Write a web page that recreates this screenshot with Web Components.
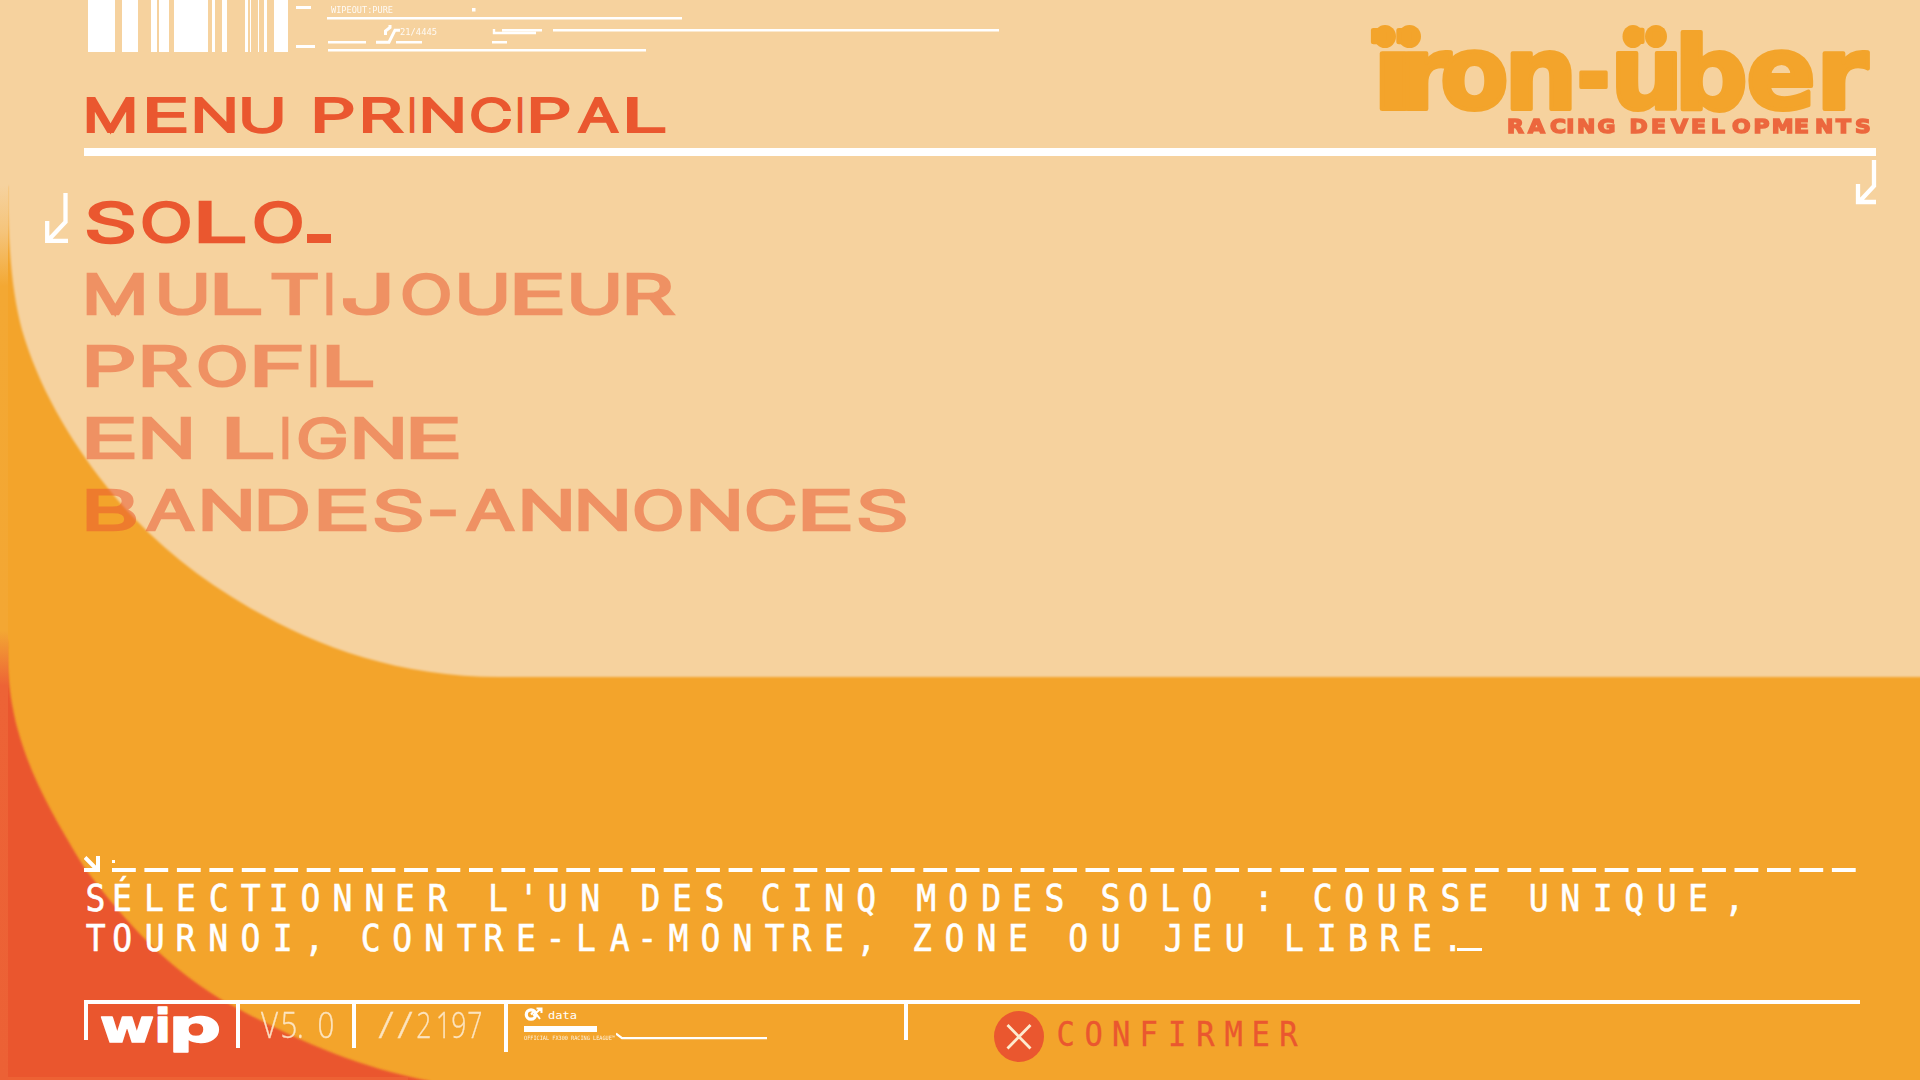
<!DOCTYPE html>
<html lang="fr">
<head>
<meta charset="utf-8">
<title>Menu principal</title>
<style>
html,body{margin:0;padding:0;width:1920px;height:1080px;overflow:hidden;background:#f3a42b}
</style>
</head>
<body>
<game-screen></game-screen>
<script>
const shadow = (el, html) => {
  const t = document.createElement('template');
  t.innerHTML = html;
  const root = el.attachShadow({mode: 'open'});
  root.append(t.content.cloneNode(true));
  return root;
};
const pen = document.createElement('canvas').getContext('2d');
const CAP = {'Roboto': .711, 'DejaVu Sans Mono': .729, 'DejaVu Sans': .729, 'Open Sans': .714, 'Inter': .727};

/* One line of text whose letters sit on a fixed pitch.
   at: left edge of every non-blank letter; w: default ink width, then letter exceptions.
   plain: all letters share one horizontal scale (its value) and are centred in their cells. */
class PitchText extends HTMLElement {
  connectedCallback() {
    if (this.shadowRoot) return;
    const a = (n, d) => this.getAttribute(n) ?? d;
    const text = this.textContent;
    const family = a('face', 'Inter'), weight = a('weight', '400');
    const h = +a('cap', 42), sw = +a('pen', 0), k = +a('ratio', CAP[family]);
    const size = (h - sw) / k;
    const at = a('at', '').split(' ').map(Number), origin = +a('origin', at[0]);
    const [base, ...rest] = a('w', '49').split(' ');
    const special = Object.fromEntries(rest.map(r => [r[0], +r.slice(1)]));
    const q = +a('plain', 1) || 1;
    pen.font = `${weight} ${size}px "${family}"`;
    let body = '', i = 0, end = 0;
    if (this.hasAttribute('span')) {
      const [s, e] = a('span').split(' ').map(Number);
      body = `<text y="${h - sw / 2}" x="${s - origin}" textLength="${e - s}" lengthAdjust="spacingAndGlyphs">${text}</text>`;
      end = e;
    } else {
      const xs = [];
      let spans = '';
      for (const c of text) {
        if (c === ' ') { spans += ' '; xs.push((at[i - 1] + at[i]) / 2 / q - origin / q); continue; }
        const m = pen.measureText(c), W = special[c] ?? +base;
        const l = m.actualBoundingBoxLeft, r = m.actualBoundingBoxRight;
        const s = W / (r + l + sw);
        const x = at[i] - origin + s * (l + sw / 2);
        spans += `<tspan x="${x.toFixed(2)}" textLength="${(m.width * s).toFixed(2)}" lengthAdjust="spacingAndGlyphs">${c}</tspan>`;
        xs.push(((at[i] - origin + W / 2) / q - (r - l) / 2).toFixed(2));
        end = at[i++] + W;
      }
      body = this.hasAttribute('plain') ? `<text transform="scale(${q} 1)" y="${h - sw / 2}" x="${xs.join(' ')}">${text}</text>` : `<text y="${h - sw / 2}">${spans}</text>`;
    }
    shadow(this, `<style>
      :host{display:block}
      svg{display:block;overflow:visible}
      text{font-family:"${family}",sans-serif;font-weight:${weight};font-size:${size}px;fill:currentColor;
        stroke:currentColor;stroke-width:${sw};stroke-linejoin:${a('join', 'miter')};stroke-miterlimit:3;white-space:pre}
    </style>
    <svg width="${Math.ceil(end - origin)}" height="${h}">${body}</svg>`);
  }
}

class SceneBackdrop extends HTMLElement {
  connectedCallback() {
    shadow(this, `<style>:host{display:block;grid-area:1/1;width:1920px;height:1080px}svg{display:block}</style>
    <svg width="1920" height="1080">
      <defs>
        <linearGradient id="rim" gradientUnits="userSpaceOnUse" x1="0" y1="0" x2="0" y2="1080">
          <stop offset=".172" stop-color="#f6d29e"/><stop offset=".215" stop-color="#f5c47a"/><stop offset=".265" stop-color="#f3a833"/>
          <stop offset=".584" stop-color="#f3a733"/><stop offset=".635" stop-color="#ed6336"/><stop offset="1" stop-color="#ec6135"/>
        </linearGradient>
        <filter id="soft" x="-5%" y="-5%" width="110%" height="110%"><feGaussianBlur stdDeviation="1.1"/></filter>
      </defs>
      <rect width="1920" height="1080" fill="#f3a42b"/>
      <path filter="url(#soft)" fill="#f6d29e" d="M-30 -30V186H7.500C8 245 12 293 22 330C38 385 68 438 107 487C146 536 193 575 250 608C320 648 400 677 500 677H1950V-30Z"/>
      <path filter="url(#soft)" fill="#ea572f" d="M-20 640H7C8 670 8 690 17 727C30 775 52 815 84 867C125 922 165 965 222 1000C280 1032 350 1066 430 1081V1110H-20Z"/>
      <rect width="8" y="183" height="897" fill="url(#rim)"/>
      <rect x="8" y="1077" width="400" height="3" fill="#ee6a38" opacity=".6"/>
    </svg>`);
  }
}

class TelemetryStrip extends HTMLElement {
  connectedCallback() {
    const bars = [[88,27],[122,16],[151,6],[159,10],[174,34],[212,3],[222,5],[245,3],[250,1],[258,1],[264,3],[274,14]];
    shadow(this, `<style>
      :host{display:flex;height:52px;padding-left:4px}
      svg{display:block;flex:none}
      .data{flex:none;width:711px;height:52px;color:#fff;display:grid;grid-template:1fr/1fr}
      .data>*{grid-area:1/1}
      .a{padding:5.500px 0 0 43px;opacity:.9}.b{padding:29px 0 0 112px;opacity:.9}
    </style>
    <svg width="200" height="52" fill="#fff">${bars.map(([x, w]) => `<rect x="${x - 88}" width="${w}" height="52"/>`).join('')}</svg>
    <div class="data">
      <svg width="711" height="52" viewBox="288 0 711 52" fill="none" stroke="#fff" stroke-width="2.400">
        <path stroke-width="3" d="M296 7.500H311M296 46.500H315"/>
        <path d="M327 18.200H682M553 30.200H999M328 50.200H646M328 42.200H366M396 42.200H422M492 42.200H507M502 30.200H542M494 29V33H536"/>
        <path stroke-width="3" d="M385.500 35V31L390 27.500V25M400 30.200H395L389 42.200H376"/>
        <rect x="472" y="8" width="3.500" height="3.500" fill="#fff" stroke="none"/>
      </svg>
      <pitch-text class="a" face="DejaVu Sans Mono" cap="6.500" origin="331" span="331 393">WIPEOUT:PURE</pitch-text>
      <pitch-text class="b" face="DejaVu Sans Mono" cap="6" origin="400" span="400 437">21/4445</pitch-text>
    </div>`);
  }
}

class TeamLogo extends HTMLElement {
  connectedCallback() {
    shadow(this, `<style>
      :host{display:flex;flex-direction:column;width:512px;margin-right:44px;padding-top:22px;box-sizing:border-box;height:148px}
      .name{color:#f3a42b;padding-top:28px}
      .mark{display:grid}
      .mark>*{grid-area:1/1}
      .mark svg{display:block}
      .sub{color:#ec5f36;margin:7px 0 0 142px;filter:blur(.7px);opacity:.92}
    </style>
    <div class="mark">
      <svg width="512" height="89" viewBox="1364 22 512 89" fill="#f3a42b"><ellipse cx="1385" cy="36.500" rx="11" ry="11.500"/><ellipse cx="1409.500" cy="36.500" rx="11.500" ry="11.500"/><ellipse cx="1633" cy="36.500" rx="10.500" ry="11.500"/><ellipse cx="1656" cy="36.500" rx="11" ry="11.500"/></svg>
      <pitch-text class="name" face="DejaVu Sans" weight="700" ratio=".56" cap="61" pen="4" join="round" origin="1364" at="1370 1405 1442 1510 1579 1615 1680 1748 1822" w="62 ï48 r48 o65 -29 b66 e66">ïron-über</pitch-text>
    </div>
    <pitch-text plain="1.1" class="sub" face="DejaVu Sans" weight="700" cap="16" pen="1.500" origin="1506" at="1507 1528 1549 1567.500 1577 1597 1630 1650 1671 1690 1710 1732 1753 1773.500 1793 1815 1835 1854" w="17.500 I5">RACING DEVELOPMENTS</pitch-text>`);
  }
}

class CornerArrow extends HTMLElement {
  connectedCallback() {
    shadow(this, `<style>:host{display:block}svg{display:block;overflow:visible}</style>
    <svg width="${this.getAttribute('width')}" height="${this.getAttribute('height')}" viewBox="${this.getAttribute('box')}" fill="none" stroke="#fff" stroke-width="4.300"><path d="${this.getAttribute('line')}"/></svg>`);
  }
}

class MenuItem extends HTMLElement {
  connectedCallback() {
    const on = this.hasAttribute('selected');
    shadow(this, `<style>
      :host{display:grid;grid-template:42px/23px auto auto 1fr;height:42px;align-items:end;color:#ea572f}
      .mark{width:23px;height:50px;margin-top:-8px}
      .label{margin-left:18px;${on ? '' : 'opacity:.52'}}
      .cursor{width:24px;height:9px;margin-left:4px;background:currentColor}
    </style>
    <div class="mark">${on ? '<corner-arrow width="23" height="50" box="45 192 23 50" line="M65.500 192V221L48 239.500M47.200 220V239.800H68"></corner-arrow>' : ''}</div>
    <div class="label"><slot></slot></div>${on ? '<div class="cursor"></div>' : ''}`);
  }
}

class MainMenu extends HTMLElement {
  connectedCallback() {
    const p = (at, s) => `<pitch-text weight="200" pen="4.600" w="49 I6.500 M58 B51 D51 -26" at="${at}">${s}</pitch-text>`;
    shadow(this, `<style>:host{display:flex;flex-direction:column;gap:30px;padding:45px 0 0 45px}</style>
      <menu-item selected>${p('86 142 198 254', 'SOLO')}</menu-item>
      <menu-item>${p('86 158 214 270 326 342 402 458 514 570 626', 'MULTIJOUEUR')}</menu-item>
      <menu-item>${p('86 142 198 254 310 326', 'PROFIL')}</menu-item>
      <menu-item>${p('86 142 226 282 298 354 410', 'EN LIGNE')}</menu-item>
      <menu-item>${p('86 146 202 258 318 374 430 466 522 578 634 690 746 802 858', 'BANDES-ANNONCES')}</menu-item>`);
  }
}

class BriefingText extends HTMLElement {
  connectedCallback() {
    let dashes = '';
    for (let i = 0; i < 54; i++) dashes += `M${(112 + i * 32.45).toFixed(1)} 870h23.800`;
    shadow(this, `<style>
      :host{display:flex;flex-direction:column;height:144px;padding-left:84px;box-sizing:border-box;color:#fff}
      svg{display:block}
      .one{margin:11px 0 0 3px}
      .row{display:flex;align-items:flex-end;margin:12px 0 0 3px}
      .cursor{width:25px;height:3.500px;margin-left:2px;background:#fff}
    </style>
    <svg width="1776" height="16" viewBox="84 856 1776 16" fill="none" stroke="#fff" stroke-width="4">
      <path d="M85 857.500L97 869.500M98 856V870H84"/><rect x="112" y="860" width="3" height="3" fill="#fff" stroke="none"/><path d="${dashes}"/>
    </svg>
    <pitch-text plain=".88" class="one" face="DejaVu Sans Mono" cap="28" pen=".6" w="17 '5 ,9 :5" at="87 114 146 178 210 242 270 302 334 366 397 430 490 526 549 582 642 674 706 762 794 826 858 918 950 983 1014 1046 1102 1130 1162 1194 1261 1314 1346 1378 1410 1442 1470 1530 1562 1594 1626 1658 1690 1729">SÉLECTIONNER L'UN DES CINQ MODES SOLO : COURSE UNIQUE,</pitch-text>
    <div class="row"><pitch-text plain=".88" face="DejaVu Sans Mono" cap="28" pen=".6" w="17 ,9 -13 .5" at="87 114 146 178 210 242 274 309 362 394 426 458 486 518 549 578 611 641 670 702 734 766 794 826 861 914 946 978 1010 1070 1102 1164 1194 1226 1286 1318 1350 1382 1414 1450">TOURNOI, CONTRE-LA-MONTRE, ZONE OU JEU LIBRE.</pitch-text><div class="cursor"></div></div>`);
  }
}

class StatusCell extends HTMLElement {
  connectedCallback() {
    shadow(this, `<style>:host{display:block;flex:none;box-sizing:border-box;border-left:4px solid #fff}</style><slot></slot>`);
  }
}

class StatusBar extends HTMLElement {
  connectedCallback() {
    shadow(this, `<style>
      :host{display:block;height:80px;margin-left:84px}
      .line{width:1776px;height:4px;background:#fff}
      .cells{display:flex;align-items:flex-start;color:#fff}
      .c1{width:152px;height:36px}.c2{width:116px;height:44px}.c3{width:152px;height:44px}.c4{width:400px;height:48px}.c5{width:90px;height:36px}
      .wip{margin:12px 0 0 12px}
      .v{margin:8px 0 0 22px;color:#fdebd0;opacity:.9}
      .data{display:flex;gap:5px;padding:3px 0 0 16px;align-items:flex-start}
      .data pitch-text{margin-top:4px}
      .data svg,.foot svg{display:block;flex:none}
      .bar{width:73px;height:6px;background:#fff;margin:5px 0 0 16px}
      .foot{display:flex;margin-left:16px}
      .foot pitch-text{margin-top:4px;width:92px;opacity:.85}
      .ok{display:flex;color:#ea572f;padding-top:7px}
      .ok pitch-text{margin:10px 0 0 14px}
    </style>
    <div class="line"></div>
    <div class="cells">
      <status-cell class="c1"><pitch-text class="wip" face="DejaVu Sans" weight="700" ratio=".55" cap="26.500" pen="1.500" at="100 157 172" w="54 i11 p48" join="round">wip</pitch-text></status-cell>
      <status-cell class="c2"><pitch-text plain=".82" class="v" face="Open Sans" weight="300" cap="26" pen=".3" at="262 282 298 319" w="14 V15 .4" >V5. 0</pitch-text></status-cell>
      <status-cell class="c3"><pitch-text class="v" face="Open Sans" weight="300" cap="26" pen=".3" at="378 397 417 438 452 468" w="13.500 /15.500 17">//2197</pitch-text></status-cell>
      <status-cell class="c4">
        <div class="data"><svg width="19" height="14" viewBox="0 0 19 14" fill="none" stroke="#fff"><circle cx="7" cy="7.500" r="4.700" stroke-width="3.200"/><path d="M7 7.500L10 4L16 12M9 8.500L17 1.500M12.500 1.500H17.500V6" stroke-width="2"/></svg>
        <pitch-text face="DejaVu Sans Mono" cap="7.500" span="548 577" origin="548">data</pitch-text></div>
        <div class="bar"></div>
        <div class="foot"><pitch-text face="DejaVu Sans Mono" cap="4.300" span="524 615" origin="524">OFFICIAL FX300 RACING LEAGUE™</pitch-text>
        <svg width="151" height="10" viewBox="616 1032 151 10" fill="none" stroke="#fff" stroke-width="2.200"><path d="M616 1033.500L622 1038.200H767"/></svg></div>
      </status-cell>
      <status-cell class="c5"></status-cell>
      <div class="ok"><svg width="50" height="51" viewBox="0 0 50 51"><ellipse cx="25" cy="25.500" rx="25" ry="25.500" fill="#ea572f"/><path d="M13.500 14L36.500 37.500M36.500 14L13.500 37.500" stroke="#fdebcf" stroke-width="2.800"/></svg>
      <pitch-text plain=".9" face="DejaVu Sans Mono" cap="25" pen=".3" w="15" at="1058 1086 1114 1142 1170 1199 1226 1254 1282">CONFIRMER</pitch-text></div>
    </div>`);
  }
}

class GameScreen extends HTMLElement {
  connectedCallback() {
    shadow(this, `<style>
      :host{display:grid;grid-template:1080px/1920px;font-family:Inter,sans-serif}
      .ui{grid-area:1/1;display:flex;flex-direction:column;height:1080px;position:relative}
      header{display:flex;justify-content:space-between;height:148px;padding-left:84px}
      .title{color:#ea572f;margin:45px 0 0 2px}
      .rule{height:8px;width:1792px;margin-left:84px;background:#fff;flex:none}
      main{display:flex;justify-content:space-between;height:700px}
      .turn{margin:4px 44px 0 0}
    </style>
    <scene-backdrop></scene-backdrop>
    <div class="ui">
      <header>
        <div><telemetry-strip></telemetry-strip>
        <pitch-text class="title" cap="35.500" weight="200" pen="3.800" w="41 I5 M49" at="86 146 194 242 314 362 409.500 422 470 517.500 530 578 626">MENU PRINCIPAL</pitch-text></div>
        <team-logo></team-logo>
      </header>
      <div class="rule"></div>
      <main><main-menu></main-menu>
      <corner-arrow class="turn" width="20" height="44" box="1856 160 20 44" line="M1874 160V186L1859 202M1858 184V202H1876"></corner-arrow></main>
      <briefing-text></briefing-text>
      <status-bar></status-bar>
    </div>`);
  }
}

customElements.define('pitch-text', PitchText);
customElements.define('scene-backdrop', SceneBackdrop);
customElements.define('telemetry-strip', TelemetryStrip);
customElements.define('team-logo', TeamLogo);
customElements.define('corner-arrow', CornerArrow);
customElements.define('menu-item', MenuItem);
customElements.define('main-menu', MainMenu);
customElements.define('briefing-text', BriefingText);
customElements.define('status-cell', StatusCell);
customElements.define('status-bar', StatusBar);
customElements.define('game-screen', GameScreen);
</script>
</body>
</html>
